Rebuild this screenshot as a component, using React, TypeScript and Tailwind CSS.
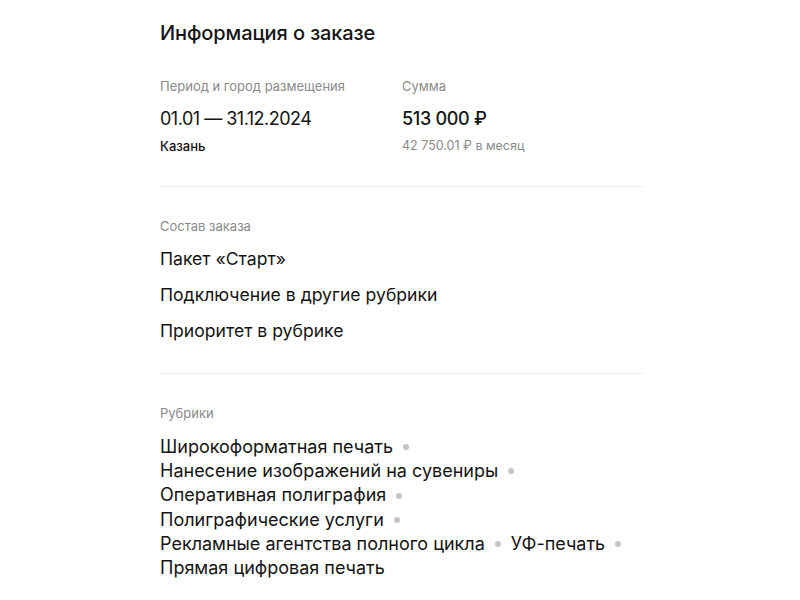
const rubrics = [
  'Широкоформатная печать',
  'Нанесение изображений на сувениры',
  'Оперативная полиграфия',
  'Полиграфические услуги',
  'Рекламные агентства полного цикла',
  'УФ-печать',
  'Прямая цифровая печать',
]

function Label({ children }: { children: React.ReactNode }) {
  return <p className="text-[13px] leading-4 text-[#8a8a8a]">{children}</p>
}

export default function App() {
  return (
    <div className="min-h-screen bg-white font-['Inter',sans-serif] text-[#141414]">
      <div className="ml-[160px] w-[483px] pt-[21px]">
        <h1 className="text-[20px] font-medium leading-6 tracking-[-0.1px]">Информация о заказе</h1>

        <div className="mt-[33px] flex pb-[32px]">
          <div className="w-[242px]">
            <Label>Период и город размещения</Label>
            <p className="mt-[13px] text-[18px] leading-6 tracking-[-0.5px]">01.01 — 31.12.2024</p>
            <p className="mt-[7px] text-[13px] font-medium leading-4">Казань</p>
          </div>
          <div>
            <Label>Сумма</Label>
            <p className="mt-[13px] text-[18px] font-medium leading-6 tracking-[-0.3px]">513 000 ₽</p>
            <p className="mt-[7px] text-[12.5px] leading-4 text-[#8a8a8a]">42 750.01 ₽ в месяц</p>
          </div>
        </div>

        <div className="h-px bg-[#ececec]" />

        <div className="pt-[31px] pb-[30px]">
          <Label>Состав заказа</Label>
          <ul className="mt-[13px] flex flex-col gap-[12px] text-[17.6px] leading-6">
            <li>Пакет «Старт»</li>
            <li>Подключение в другие рубрики</li>
            <li>Приоритет в рубрике</li>
          </ul>
        </div>

        <div className="h-px bg-[#ececec]" />

        <div className="pt-[31px]">
          <Label>Рубрики</Label>
          <div className="mt-[14px] flex w-[483px] flex-wrap text-[18px] leading-[24.2px]">
            {rubrics.map((r, i) => (
              <span key={r} className="flex items-center whitespace-nowrap">
                {r}
                {i < rubrics.length - 1 && (
                  <span className="mx-[10px] inline-block h-[6px] w-[6px] rounded-full bg-[#c4c4c4]" />
                )}
              </span>
            ))}
          </div>
        </div>
      </div>
    </div>
  )
}
